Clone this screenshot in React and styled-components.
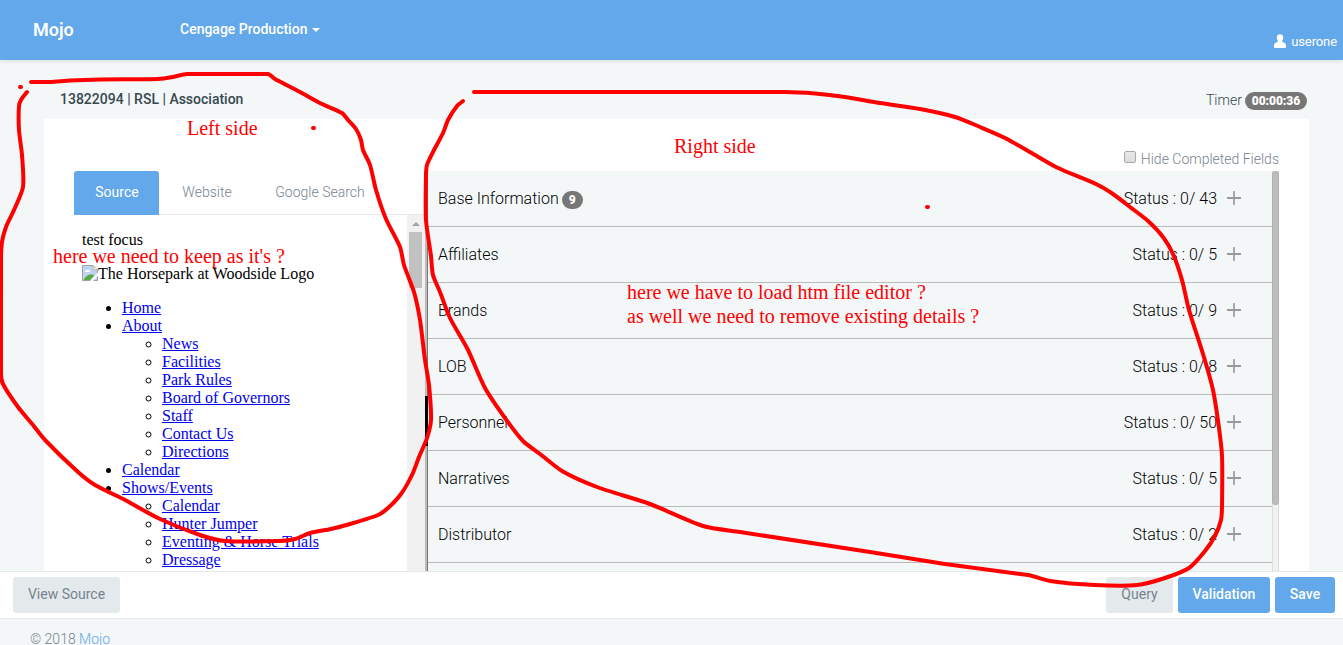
import React from "react";
import styled, { createGlobalStyle } from "styled-components";

const Global = createGlobalStyle`
  * { box-sizing: border-box; }
  html, body { margin: 0; height: 100%; overflow: hidden; }
  body { background: #f3f7f8; font-family: Roboto, "Liberation Sans", sans-serif; font-size: 14px; font-weight: 300; color: #76838f; }
`;
const Page = styled.div`position: relative; width: 1343px; height: 645px; overflow: hidden; display: flex; flex-direction: column;`;
const Header = styled.header`
  flex: 0 0 60px; display: flex; background: #62a8ea; color: #fff; position: relative;
  box-shadow: 0 2px 4px rgba(0, 0, 0, 0.08); padding: 0 6px 0 33px;
`;
const Brand = styled.div`width: 147px; font-size: 18px; font-weight: 600; line-height: 60px;`;
const Menu = styled.div`display: flex; align-items: center; gap: 5px; height: 60px; flex: 1; font-weight: 500; line-height: 22px; padding-bottom: 2px;`;
const Caret = styled.span`border: 4px solid transparent; border-top-color: #fff; border-bottom: 0; margin-top: 2px;`;
const User = styled.div`display: flex; align-items: center; align-self: flex-end; gap: 5px; height: 38px; font-size: 13px; font-weight: 400; letter-spacing: -0.1px;`;
const Main = styled.main`flex: 0 0 511px; padding: 0 34px 0 44px; overflow: hidden;`;
const TitleRow = styled.div`
  height: 59px; padding: 28px 2px 0 16px; display: flex; justify-content: space-between; line-height: 22px;
`;
const Title = styled.div`font-weight: 500; color: #37474f;`;
const Timer = styled.div`display: flex; gap: 3px; color: #37474f; padding-top: 1px;`;
const Badge = styled.span`
  background: #777; color: #fff; font-size: 12px; font-weight: 900; line-height: 18px; height: 18px; border-radius: 9px;
  padding: 0 7px; letter-spacing: -0.1px; margin-top: ${(p) => p.$drop || 0}px;
`;
const Card = styled.section`height: 452px; background: #fff; padding: 0 30px; display: flex;`;
const LeftPane = styled.div`width: 351px; padding-top: 52px; display: flex; flex-direction: column;`;
const Tabs = styled.nav`display: flex; flex: 0 0 44px; height: 44px; min-height: 0; border-bottom: 1px solid #e4eaec;`;
const Tab = styled.div`
  height: 44px; width: ${(p) => p.$w}px; text-align: center; line-height: 42px; padding-left: ${(p) => (p.$wide ? 0 : 1)}px;
  border-radius: 3px 3px 0 0; background: ${(p) => (p.$active ? "#62a8ea" : "transparent")}; color: ${(p) => (p.$active ? "#fff" : "#76838f")};
  font-weight: ${(p) => (p.$active ? 400 : 300)};
`;
const SourceFrame = styled.div`flex: 1; display: flex; overflow: hidden;`;
const SourceDoc = styled.div`
  flex: 1; padding: 16px 8px; height: 356px; overflow: hidden; font: 400 16px/18px "Liberation Serif", serif; color: #000;
  ul { margin: 0; padding-left: 40px; }
  a { color: #0000ee; text-decoration: underline; }
`;
const LogoLine = styled.div`display: flex; margin: 16px 0;`;
const FrameScroll = styled.div`width: 18px; background: #f1f1f1; padding: 7px 3px 0 2px;`;
const ScrollArrow = styled.div`width: 0; margin: 0 auto 6px; border: 4px solid transparent; border-top: 0; border-bottom-color: #a3a3a3;`;
const FrameThumb = styled.div`height: 56px; background: #c1c1c1;`;
const Splitter = styled.div`
  width: 3px; margin-top: 52px; background: linear-gradient(90deg, #bbb 2px, #777 2px); padding-top: 225px;
`;
const Grip = styled.div`height: 50px; background: #000;`;
const RightPane = styled.div`flex: 1; display: flex; flex-direction: column;`;
const HideRow = styled.label`flex: 0 0 52px; display: flex; justify-content: flex-end; gap: 5px; padding-top: 29px; line-height: 22px;`;
const Box = styled.span`width: 12px; height: 12px; margin-top: 3px; border: 1px solid #aaa; border-radius: 2px; background: linear-gradient(#e9e9e9, #dcdcdc);`;
const ListWrap = styled.div`display: flex; flex: 1; overflow: hidden;`;
const List = styled.div`flex: 1; height: 400px; background: #f3f7f8; overflow: hidden;`;
const Row = styled.div`
  height: 56px; border-bottom: 1px solid #bbb; padding: 0 31px 0 10px; display: flex; align-items: center; color: #000; font-size: 16px; line-height: 22px;
`;
const RowName = styled.div`flex: 1; display: flex; gap: 3px;`;
const Plus = styled.span`
  width: 14px; height: 14px; margin: 0 0 1px 10px;
  background: linear-gradient(#999, #999) center / 14px 2px no-repeat, linear-gradient(#aaa, #aaa) center / 2px 14px no-repeat;
`;
const ListScroll = styled.div`width: 7px; background: #f1f1f1; border: solid #ddd; border-width: 0 1px;`;
const ListThumb = styled.div`height: 334px; margin: 0 -1px; border-radius: 3px; background: #bcbcbc; border: 1px solid #b0b0b0;`;
const ActionBar = styled.div`
  flex: 0 0 48px; background: #fff; border: solid #e4eaec; border-width: 1px 0; padding: 5px 8px 0 13px; display: flex; gap: 5px;
`;
const Button = styled.button`
  height: 36px; width: ${(p) => p.$w}px; padding: 0 0 2px; border: 0; border-radius: 3px; font: 14px Roboto, sans-serif;
  font-weight: ${(p) => (p.$primary ? 500 : 400)};
  background: ${(p) => (p.$primary ? "#62a8ea" : "#e4eaec")}; color: ${(p) => (p.$primary ? "#fff" : "#76838f")};
`;
const Spacer = styled.div`flex: 1;`;
const Footer = styled.footer`padding: 9px 30px; line-height: 22px; a { color: #62a8ea; }`;
const Ink = styled.svg`position: absolute; left: 0; top: 0; pointer-events: none;`;
const Note = styled.div`
  position: absolute; left: ${(p) => p.$x}px; top: ${(p) => p.$y}px; color: #f00; white-space: pre;
  font: 400 20px/24px "Liberation Serif", serif;
`;

const leftLoop = [[31,82],[50,82],[70,80.5],[100,79.5],[158,79],[173,77],[187,74],[268,74],[275,79],[300,92],[322,104],[342,113],[348,120],[356,129],[361,140],[363,150],[370,165],[376,190],[386,219],[400,247],[404,265],[414,292],[420,320],[425,360],[429,385],[431,420],[427,438],[419,457],[412,475],[401,494],[388,508],[378,515],[350,524],[331,529],[310,533],[295,539],[280,541],[225,541],[200,535],[160,519],[125,500],[95,485],[78,472],[45,440],[33,425],[18,407],[3,384],[1,374],[1,260],[2,242],[6,227],[14,210],[23,187],[22,155],[19,130],[19,106],[21,100],[27,92]];
const rightLoop = [[463,101],[457,106],[448,120],[443,133],[433,152],[427,165],[426,175],[426,220],[431,256],[433,275],[440,292],[450,318],[468,350],[485,388],[505,418],[523,441],[540,454],[562,471],[597,487],[650,504],[703,526],[740,532],[870,552],[945,564],[1028,575],[1050,581],[1095,585],[1137,585],[1165,578],[1189,568],[1205,551],[1215,536],[1221,520],[1222,506],[1222,456],[1219,428],[1213,390],[1203,354],[1189,310],[1182,280],[1173,254],[1163,237],[1148,221],[1130,207],[1113,194],[1096,184],[1058,168],[1035,155],[1005,138],[980,127],[955,117],[920,109],[880,103],[845,97],[815,93.5],[785,92],[474,92]];

function smooth(p) {
  let d = `M${p[0][0]} ${p[0][1]}`;
  const handle = (from, to, len) => {
    const x = to[0] - from[0], y = to[1] - from[1];
    const k = Math.min(1 / 6, len / 4 / (Math.hypot(x, y) || 1));
    return [x * k, y * k];
  };
  for (let i = 0; i < p.length - 1; i++) {
    const a = p[i - 1] || p[i], b = p[i], c = p[i + 1], e = p[i + 2] || c;
    const len = Math.hypot(c[0] - b[0], c[1] - b[1]);
    if (len > 70) { d += `L${c[0]} ${c[1]}`; continue; }
    const h = handle(a, c, len), g = handle(b, e, len);
    d += `C${b[0] + h[0]} ${b[1] + h[1]} ${c[0] - g[0]} ${c[1] - g[1]} ${c[0]} ${c[1]}`;
  }
  return d;
}

const site = [
  ["Home"],
  ["About", ["News", "Facilities", "Park Rules", "Board of Governors", "Staff", "Contact Us", "Directions"]],
  ["Calendar"],
  ["Shows/Events", ["Calendar", "Hunter Jumper", "Eventing & Horse Trials", "Dressage"]],
];
const sections = [["Base Information", 43, 9], ["Affiliates", 5], ["Brands", 9], ["LOB", 8], ["Personnel", 50], ["Narratives", 5], ["Distributor", 2]];

const BrokenImage = () => (
  <svg width="16" height="16" viewBox="0 0 16 16">
    <path d="M.5 .5H11L15.5 5V15.5H.5Z" fill="#fff" stroke="#a0a0a0" />
    <path d="M1 1H10.500V5.500H15V15H1Z" fill="#bfd3f5" />
    <path d="M3 7a2 2 0 0 1 2-2 2 2 0 0 1 3 2Z" fill="#fff" />
    <path d="M1.500 15C4 10 7 9 11 9.500L12 11 8 15Z" fill="#56ab3e" />
    <path d="M8 16L16 7.500V10.500L11 16Z" fill="#fff" />
    <path d="M11 .5V5H15.500" fill="none" stroke="#a0a0a0" />
  </svg>
);
const UserIcon = () => (
  <svg width="12" height="14" viewBox="0 0 12 14" fill="#fff">
    <ellipse cx="6" cy="3.800" rx="3.300" ry="3.600" />
    <path d="M4 6H8V7.500C10 8.500 12 9 12 11V13Q12 14 11 14H1Q0 14 0 13V11C0 9 2 8.500 4 7.500Z" />
  </svg>
);

export default function App() {
  return (
    <Page>
      <Global />
      <Header>
        <Brand>Mojo</Brand>
        <Menu>Cengage Production<Caret /></Menu>
        <User><UserIcon />userone</User>
      </Header>
      <Main>
        <TitleRow>
          <Title>13822094 | RSL | Association</Title>
          <Timer>Timer <Badge $drop={3}>00:00:36</Badge></Timer>
        </TitleRow>
        <Card>
          <LeftPane>
            <Tabs>
              <Tab $active $w={85}>Source</Tab>
              <Tab $w={95}>Website</Tab>
              <Tab $wide $w={132}>Google Search</Tab>
            </Tabs>
            <SourceFrame>
              <SourceDoc>
                <div>test focus</div>
                <LogoLine><BrokenImage />The Horsepark at Woodside Logo</LogoLine>
                <ul>
                  {site.map(([name, kids]) => (
                    <li key={name}>
                      <a>{name}</a>
                      {kids && <ul>{kids.map((k) => <li key={k}><a>{k}</a></li>)}</ul>}
                    </li>
                  ))}
                </ul>
              </SourceDoc>
              <FrameScroll><ScrollArrow /><FrameThumb /></FrameScroll>
            </SourceFrame>
          </LeftPane>
          <Splitter><Grip /></Splitter>
          <RightPane>
            <HideRow><Box />Hide Completed Fields</HideRow>
            <ListWrap>
              <List>
                {sections.map(([name, total, badge]) => (
                  <Row key={name}>
                    <RowName>{name}{badge && <Badge $drop={3}>{badge}</Badge>}</RowName>
                    <span>Status : 0/ {total}</span>
                    <Plus />
                  </Row>
                ))}
              </List>
              <ListScroll><ListThumb /></ListScroll>
            </ListWrap>
          </RightPane>
        </Card>
      </Main>
      <ActionBar>
        <Button $w={107}>View Source</Button>
        <Spacer />
        <Button $w={67}>Query</Button>
        <Button $w={92} $primary>Validation</Button>
        <Button $w={60} $primary>Save</Button>
      </ActionBar>
      <Footer>© 2018 <a>Mojo</a></Footer>
      <Ink width="1343" height="645" fill="none" stroke="#f00" strokeWidth="4" strokeLinecap="round" strokeLinejoin="round">
        <path d={smooth(leftLoop)} />
        <path d={smooth(rightLoop)} />
        <path d="M20 87H21M313 128H314M927 207H928" />
      </Ink>
      <Note $x={187} $y={116}>Left side</Note>
      <Note $x={53} $y={244}>here we need to keep as it's ?</Note>
      <Note $x={674} $y={134}>Right side</Note>
      <Note $x={627} $y={280}>{"here we have to load htm file editor ?\nas well we need to remove existing details ?"}</Note>
    </Page>
  );
}
